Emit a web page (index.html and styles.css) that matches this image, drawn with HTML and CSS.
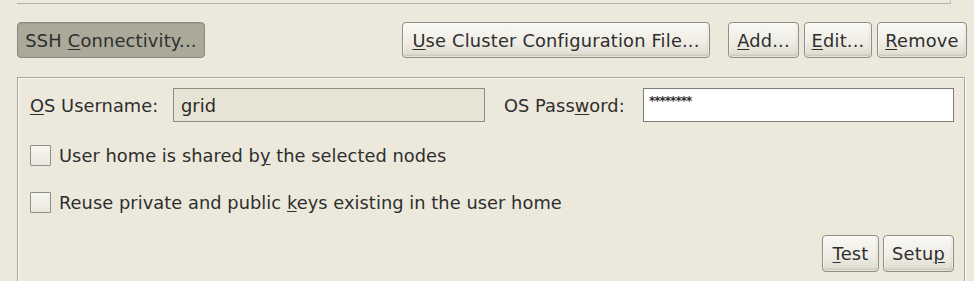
FILE: index.html
```html
<!DOCTYPE html>
<html>
<head>
<meta charset="utf-8">
<link rel="stylesheet" href="styles.css">
</head>
<body>
<div class="table-edge"></div>
<div class="toolbar">
  <button class="btn btn-pressed btn-ssh">SSH <u>C</u>onnectivity...</button>
  <div class="spacer"></div>
  <button class="btn btn-cluster"><u>U</u>se Cluster Configuration File...</button>
  <div class="btn-group">
    <button class="btn btn-add"><u>A</u>dd...</button>
    <button class="btn btn-edit"><u>E</u>dit...</button>
    <button class="btn btn-remove"><u>R</u>emove</button>
  </div>
</div>
<div class="panel">
  <div class="cred-row">
    <label class="lbl lbl-user"><u>O</u>S Username:</label>
    <div class="field field-disabled">grid</div>
    <label class="lbl lbl-pass">OS Pass<u>w</u>ord:</label>
    <div class="field field-pass">********</div>
  </div>
  <div class="check-row first">
    <span class="checkbox"></span>
    <span class="check-text">User home is shared b<u>y</u> the selected nodes</span>
  </div>
  <div class="check-row second">
    <span class="checkbox"></span>
    <span class="check-text">Reuse private and public <u>k</u>eys existing in the user home</span>
  </div>
  <div class="actions">
    <button class="btn btn-test"><u>T</u>est</button>
    <button class="btn btn-setup">Setu<u>p</u></button>
  </div>
</div>
</body>
</html>
```

FILE: styles.css
```css
html, body {
  margin: 0;
  padding: 0;
  background: #ece9dc;
  width: 974px;
  height: 281px;
  overflow: hidden;
  font-family: "DejaVu Sans", "Liberation Sans", sans-serif;
  font-size: 17.8px;
  letter-spacing: 0.06px;
  color: #2e2e2e;
}

u {
  text-decoration: underline;
  text-underline-offset: 2px;
  text-decoration-thickness: 1px;
}

.table-edge {
  margin-left: 17px;
  width: 933px;
  height: 3px;
  border-bottom: 1px solid #b3b1a6;
  border-right: 1px solid #c4c2b8;
}

.toolbar {
  display: flex;
  align-items: center;
  margin-top: 18px;
  padding: 0 7px 0 17px;
  height: 36px;
}

.spacer { flex: 1; }

.btn {
  box-sizing: border-box;
  height: 36px;
  padding: 0;
  font: inherit;
  letter-spacing: 0.2px;
  color: #2e2e2e;
  border: 1px solid #8f8d84;
  border-radius: 4px;
  background: linear-gradient(#f9f8f4 0%, #efede5 55%, #dedbcf 100%);
  box-shadow: inset 0 0 0 1px rgba(255,255,255,0.55), inset -1px -2px 2px rgba(120,118,105,0.25);
  text-align: center;
  white-space: nowrap;
}

.btn-pressed {
  background: #aba999;
  border-color: #8c8a7e;
  box-shadow: inset 0 1px 1px rgba(0,0,0,0.08);
}

.btn-ssh { width: 188px; }
.btn-cluster { width: 308px; }

.btn-group {
  display: flex;
  gap: 5px;
  margin-left: 18px;
}

.btn-add { width: 71px; }
.btn-edit { width: 68px; }
.btn-remove { width: 90px; }

.panel {
  box-sizing: border-box;
  margin: 19px 0 0 17px;
  width: 948px;
  height: 204px;
  border-top: 1px solid #a9a79c;
  border-left: 1px solid #a9a79c;
  border-right: 1px solid #a9a79c;
  box-shadow: inset 1px 1px 0 #fbfaf6, 1px 0 0 #fbfaf6;
  padding: 10px 10px 0 12px;
}

.cred-row {
  display: flex;
  align-items: center;
  height: 34px;
}

.lbl { display: block; }
.lbl-user { width: 143px; }
.lbl-pass { width: 139px; margin-left: 19px; }

.field {
  box-sizing: border-box;
  height: 34px;
  border: 1px solid #8d8c85;
  padding: 0 7px;
  display: flex;
  align-items: center;
}

.field-disabled {
  width: 312px;
  background: #e7e3d5;
  color: #2a2a2a;
}

.field-pass {
  width: 311px;
  background: #ffffff;
  border-color: #7e7d77;
  font-size: 12px;
  font-weight: bold;
  letter-spacing: -1px;
  padding-left: 5px;
  align-items: flex-start;
  padding-top: 5px;
}

.check-row {
  display: flex;
  align-items: center;
  height: 21px;
}

.check-row.first { margin-top: 23px; }
.check-row.second { margin-top: 26px; }

.checkbox {
  box-sizing: border-box;
  width: 21px;
  height: 21px;
  border: 1px solid #8e8d86;
  border-radius: 1px;
  background: linear-gradient(#f7f6f1, #e9e7de);
  margin-right: 8px;
}

.actions {
  display: flex;
  justify-content: flex-end;
  gap: 4px;
  margin-top: 22px;
}

.btn-test { width: 57px; height: 37px; }
.btn-setup { width: 71px; height: 37px; }
```
